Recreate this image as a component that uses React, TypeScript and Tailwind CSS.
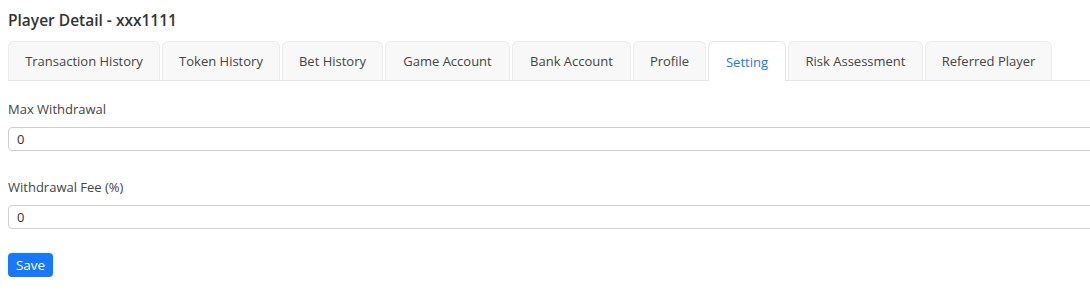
const tabs = [
  { label: "Transaction History", w: "w-[152px]" },
  { label: "Token History", w: "w-[118px]" },
  { label: "Bet History", w: "w-[101px]" },
  { label: "Game Account", w: "w-[125px]" },
  { label: "Bank Account", w: "w-[119px]" },
  { label: "Profile", w: "w-[73px]" },
  { label: "Setting", w: "w-[78px]", active: true },
  { label: "Risk Assessment", w: "w-[135px]" },
  { label: "Referred Player", w: "w-[127px]" },
];

function Field({ label, value }: { label: string; value: string }) {
  return (
    <div className="flex flex-col">
      <label className="h-[21px] pt-[1px] leading-[21px] text-[13px] text-[#444]">{label}</label>
      <input
        readOnly
        value={value}
        className="mt-[8px] h-[24px] w-[1100px] rounded-[4px] border border-[#d0d0d0] bg-white px-[8px] text-[13px] text-[#333] outline-none"
      />
    </div>
  );
}

export default function App() {
  return (
    <div
      className="h-[294px] w-[1090px] overflow-hidden bg-white pl-[8px]"
      style={{ fontFamily: '"Open Sans", "Noto Sans", sans-serif' }}
    >
      <h1 className="pt-[10px] text-[15.5px] font-semibold leading-[21px] text-[#333]">
        Player Detail - xxx1111
      </h1>

      <div className="mt-[10px] flex h-[40px] gap-[2px] border-b border-[#e6e6e6]">
        {tabs.map((t) => (
          <div
            key={t.label}
            className={
              t.active
                ? `${t.w} -mb-px flex items-center justify-center whitespace-nowrap rounded-t-[6px] border border-b-0 border-[#e6e6e6] bg-white pt-[2px] text-[13px] text-[#1677ff]`
                : `${t.w} flex items-center justify-center whitespace-nowrap rounded-t-[6px] border border-b-0 border-[#ececec] bg-[#f8f8f8] pt-[2px] text-[13px] text-[#444]`
            }
          >
            {t.label}
          </div>
        ))}
      </div>

      <div className="mt-[17px] flex flex-col gap-[25px]">
        <Field label="Max Withdrawal" value="0" />
        <Field label="Withdrawal Fee (%)" value="0" />
      </div>

      <button className="mt-[24px] h-[24px] w-[45px] rounded-[4px] bg-[#1677ff] text-[13.5px] text-white">
        Save
      </button>
    </div>
  );
}
